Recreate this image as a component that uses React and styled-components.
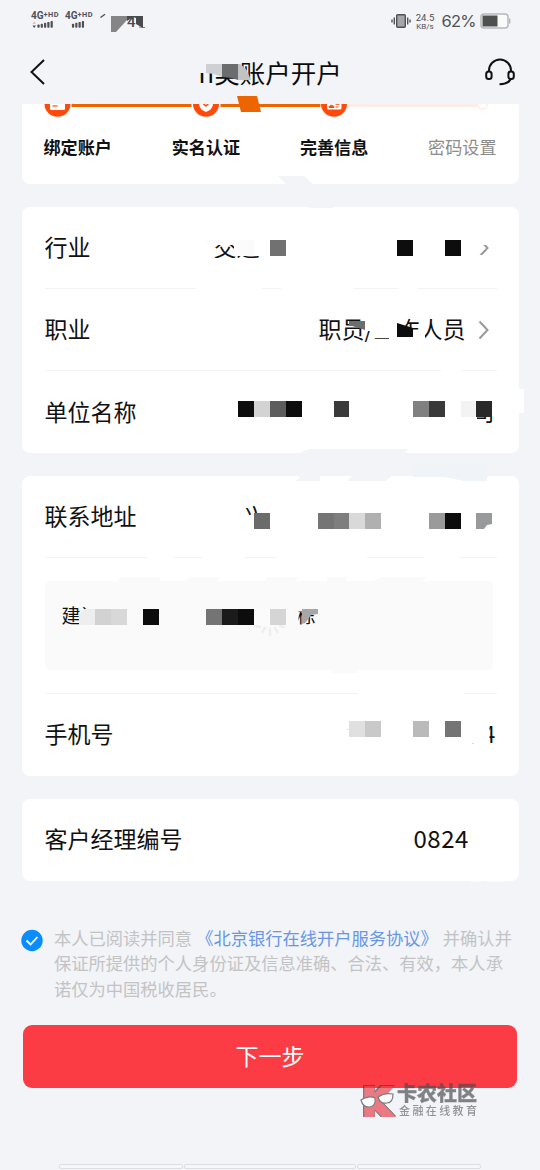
import React from "react";
import styled, { createGlobalStyle } from "styled-components";

const Global = createGlobalStyle`
  * { box-sizing: border-box; }
  html, body { margin: 0; padding: 0; background: #f2f4f8; }
  body { font-family: "Noto Sans CJK SC", "Noto Sans", sans-serif; color: #111; }
`;

const Page = styled.div`
  position: relative;
  display: flex;
  flex-direction: column;
  width: 540px;
  height: 1170px;
  overflow: hidden;
  background: #f2f4f8;
`;

const StatusBar = styled.header`
  display: flex;
  align-items: flex-start;
  justify-content: space-between;
  height: 42px;
  padding: 11px 29px 0 31px;
  color: #505154;
`;
const StatusGroup = styled.div`
  display: flex;
  align-items: ${(p) => p.$align || "flex-start"};
  gap: ${(p) => p.$gap}px;
`;
const Carrier = styled.div`
  display: flex;
  flex-direction: column;
  width: 30px;
  height: 18px;
`;
const Network = styled.div`
  display: flex;
  font: 700 10px/10px Roboto, sans-serif;
  white-space: nowrap;
  span { font-size: 7.4px; line-height: 8px; letter-spacing: 0.5px; }
`;
const Speed = styled.div`
  width: 20px;
  margin-right: 2px;
  font: 400 9.5px/10px Roboto, sans-serif;
  text-align: center;
  white-space: nowrap;
  small { display: block; font-size: 8px; line-height: 7px; }
`;
const Percent = styled.div`
  width: 34px;
  font: 400 16.5px/20px Inter, sans-serif;
  letter-spacing: -0.8px;
`;

const NavBar = styled.nav`
  display: flex;
  align-items: center;
  justify-content: space-between;
  height: 62px;
  padding: 0 25px 2px 29px;
`;
const Title = styled.h1`
  display: flex;
  margin: 0 0 0 9px;
  font-size: 25.5px;
  line-height: 36px;
  font-weight: 400;
  color: #0c0c0c;
`;
const Roman = styled.span`
  width: 16px;
  letter-spacing: 1.3px;
`;

const Card = styled.section`
  width: 497px;
  height: ${(p) => p.$h}px;
  flex: none;
  margin: 0 auto 23px 21.5px;
  padding: 0 23px;
  border-radius: 8px;
  background: #fff;
`;
const StepsCard = styled(Card)`
  padding: 0 22px;
  border-radius: 0 0 8px 8px;
`;
const StepTrack = styled.div`
  height: 30px;
  overflow: hidden;
  svg { display: block; }
`;
const StepLabels = styled.div`
  display: flex;
  justify-content: space-between;
`;
const StepLabel = styled.span`
  font-size: 17.1px;
  line-height: 26px;
  font-weight: ${(p) => (p.$pending ? 400 : 700)};
  color: ${(p) => (p.$pending ? "#8c8c8c" : "#111")};
`;

const Row = styled.div`
  display: flex;
  align-items: center;
  justify-content: space-between;
  height: ${(p) => p.$h || 82}px;
  margin-right: -1px;
  padding-bottom: 3px;
  border-bottom: ${(p) => (p.$last ? 0 : 1)}px solid #f3f3f4;
`;
const Label = styled.span`
  font-size: 23px;
  line-height: 32px;
  color: #111;
`;
const Value = styled.div`
  display: flex;
  align-items: center;
  gap: 12px;
  font-size: 23px;
  line-height: 32px;
  padding-right: ${(p) => p.$end ?? 8}px;
  svg { margin-top: 3px; }
`;
const Fragment = styled.span`
  width: ${(p) => p.$w}px;
  margin-right: ${(p) => p.$gap || 0}px;
  clip-path: ${(p) => p.$clip || "none"};
  white-space: nowrap;
`;
const AddressWrap = styled.div`
  height: 136px;
  padding-top: 23.4px;
  margin-right: -1px;
  border-bottom: 1px solid #f3f3f4;
`;
const AddressBox = styled.div`
  display: flex;
  width: 448.5px;
  height: 89px;
  padding: 21px 17px;
  border-radius: 5px;
  background: #fafafa;
  font-size: 19px;
  line-height: 26px;
`;
const ManagerCode = styled.span`
  width: 82px;
  font-family: "Noto Sans CJK SC", sans-serif;
  font-size: 24px;
  letter-spacing: 0.55px;
`;

const Agreement = styled.div`
  display: flex;
  gap: 11px;
  height: 76px;
  margin: 21px 0 0 21px;
`;
const AgreementText = styled.p`
  margin: 0;
  color: #c3c3c4;
  font-size: 17.28px;
  line-height: 25.5px;
  white-space: nowrap;
  a { color: #6796e8; margin: 0 5px 0 4px; }
`;
const NextButton = styled.button`
  width: 494px;
  height: 63px;
  flex: none;
  margin: 24.5px 0 0 23px;
  padding: 0 0 4px;
  border: 0;
  border-radius: 9px;
  background: #fc3c44;
  color: #fff;
  font: 400 23px/32px "Noto Sans CJK SC", sans-serif;
`;
const BottomTabs = styled.div`
  display: flex;
  gap: 1px;
  margin: 75.5px 0 0 59px;
`;
const BottomTab = styled.div`
  width: ${(p) => p.$w}px;
  height: 5px;
  border: 1px solid #dddee2;
  border-radius: 2px;
  background: #f6f7f9;
`;

const Overlay = styled.div`
  position: absolute;
  inset: 0;
  pointer-events: none;
`;
const Scrap = styled.i`
  position: absolute;
  left: ${(p) => p.$x}px;
  top: ${(p) => p.$y}px;
  width: ${(p) => p.$w}px;
  height: ${(p) => p.$h}px;
  background: ${(p) => p.$c};
  clip-path: ${(p) => p.$clip || "none"};
`;
const Watermark = styled.div`
  position: absolute;
  left: 359px;
  top: 1081px;
  display: flex;
  opacity: 0.68;
`;
const WatermarkLogo = styled.svg`
  overflow: visible;
  text {
    font: 700 37px "DejaVu Sans", sans-serif;
    fill: #e8404c;
    stroke: #e8404c;
    stroke-width: 4px;
    filter: drop-shadow(0.8px 0 0 #444) drop-shadow(-0.8px 0 0 #444) drop-shadow(0 0.8px 0 #444) drop-shadow(0 -0.8px 0 #444);
  }
`;
const WatermarkText = styled.div`
  margin: 1px 0 0 2px;
  color: #4a4c50;
  white-space: nowrap;
  b { display: block; font-size: 20px; line-height: 22px; font-weight: 900; -webkit-text-stroke: 0.3px #4a4c50; }
  span { display: block; margin: 0 0 0 2px; font-size: 11px; line-height: 12px; letter-spacing: 2.4px; color: #666; font-weight: 500; }
`;

const BG = "#f2f4f8";
const poly = (...pts) => `polygon(${pts.map(([x, y]) => `${x}px ${y}px`).join(",")})`;

// Each entry: x, y, width, height, colour, optional clip shape
const scraps = [
  // status bar and title
  [111, 16, 16, 16, "#858587", poly([0, 0], [16, 0], [16, 4], [5, 16], [0, 16])],
  [127, 16, 16, 12, "#4a4a4c", poly([0, 0], [16, 0], [16, 12], [9, 8], [9, 2], [6, 1], [0, 5])],
  [197, 58, 56, 15, BG, poly([0, 0], [42, 0], [42, 22], [0, 15])],
  [213, 72, 26, 6, BG, poly([0, 0], [26, 0], [26, 6], [9, 4], [0, 2])],
  [206, 64, 16, 16, "#cfd0d2", poly([0, 0], [16, 0], [16, 13], [8, 10], [0, 9])],
  [222, 64, 16, 16, "#6b6c6e", poly([0, 0], [16, 0], [16, 16], [10, 14], [0, 13])],
  [238, 64, 13, 16, "#c1c2c3", poly([0, 0], [2, 0], [8, 5], [13, 16], [0, 16])],
  [237, 96, 24, 16, "#ec6500", poly([0, 0], [20, 0], [24, 16], [4, 16])],
  [278, 176, 35, 8, BG, poly([0, 0], [26, 0], [35, 8], [8, 8])],
  [308, 207, 25, 1, BG],
  // industry
  [205, 236, 60, 9, "#fff"],
  [206, 240, 16, 4, "#fcfcfc"],
  [234, 240, 31, 15.5, "#fff"],
  [238, 240, 16, 16, "#fbfbfb"],
  [212, 258, 50, 6, "#fff"],
  [270, 240, 16, 16, "#717171"],
  [397, 240, 16, 16, "#0d0d0d"],
  [445, 240, 16, 16, "#0d0d0d"],
  [475, 236, 16, 9, "#fff"],
  [475, 255, 16, 7, "#fff"],
  [196, 287, 66, 4, "#fff"],
  [281, 287, 72, 4, "#fff"],
  [398, 287, 19, 4, "#fff"],
  // occupation
  [365, 316, 32, 15, "#fff"],
  [371, 330, 26, 7.5, "#fff"],
  [389, 330, 36, 15, "#fff"],
  [397, 316, 8, 9, "#fff"],
  [349, 321, 16, 10, "#6d6d6d", poly([0, 0], [16, 0], [16, 9], [0, 4])],
  [397, 321, 16, 16, "#0d0d0d", poly([0, 2], [16, 7], [16, 16], [0, 16])],
  [441, 369, 20, 4, "#fff"],
  // employer
  [470, 398, 26, 18, "#fff"],
  [470, 416, 7, 10, "#fff"],
  [477, 419, 9, 5, "#fff"],
  [238, 401, 16, 16, "#0d0d0d"],
  [254, 401, 16, 16, "#d3d3d3"],
  [270, 401, 16, 16, "#5d5d5d"],
  [286, 401, 16, 16, "#0d0d0d"],
  [334, 401, 15, 16, "#3a3a3a"],
  [413, 401, 16, 16, "#808080"],
  [429, 401, 16, 16, "#393939"],
  [461, 401, 15, 16, "#f3f3f3"],
  [476, 401, 16, 16, "#282828"],
  [518, 389, 6, 24, "#fff"],
  [297, 449, 111, 5, BG, poly([0, 5], [12, 0], [111, 0], [107, 5])],
  // contact address
  [413, 465, 75, 12, "#eef4f8"],
  [295, 476, 25, 5, BG, poly([4, 0], [25, 0], [25, 5], [0, 5], [5, 2])],
  [347, 476, 44, 5, BG, poly([5, 0], [44, 0], [39, 5], [0, 5])],
  [440, 476, 47, 5, "#eef4f8", poly([0, 0], [47, 0], [47, 5], [24, 5])],
  [254, 513, 16, 16, "#6b6b6b"],
  [318, 513, 16, 16, "#757575"],
  [334, 513, 15, 16, "#7e7e7e"],
  [349, 513, 16, 16, "#d9d9d9"],
  [365, 513, 16, 16, "#b0b0b0"],
  [429, 513, 16, 16, "#9a9a9a"],
  [445, 513, 16, 16, "#0d0d0d"],
  [476, 513, 16, 16, "#98999b", poly([0, 0], [16, 0], [16, 11], [11, 12], [8, 16], [0, 16])],
  [148, 556, 25, 3, "#fff"],
  [202, 556, 42, 3, "#fff"],
  [277, 556, 90, 3, "#fff"],
  [424, 556, 35, 3, "#fff"],
  // address details
  [116, 577, 44, 5, "#fafafa", poly([5, 0], [44, 0], [44, 5], [0, 5])],
  [185, 577, 36, 5, "#fafafa", poly([5, 0], [36, 0], [31, 5], [0, 5])],
  [264, 577, 36, 5, "#fafafa", poly([3, 0], [36, 0], [30, 5], [0, 5])],
  [327, 577, 19, 5, "#fafafa"],
  [370, 577, 58, 5, "#fafafa", poly([12, 0], [58, 0], [50, 5], [0, 5])],
  [332, 670, 26, 3, "#fafafa"],
  [79, 613, 16, 16, "#fafafa"],
  [79, 609, 16, 16, "#eeeeee", poly([5, 0], [16, 0], [16, 16], [0, 16], [0, 6])],
  [95, 609, 16, 16, "#d2d2d2"],
  [111, 609, 16, 16, "#d8d8d8"],
  [143, 609, 16, 16, "#0d0d0d"],
  [206, 609, 16, 16, "#747474"],
  [222, 609, 16, 16, "#1b1b1b"],
  [238, 609, 16, 16, "#0d0d0d"],
  [254, 609, 16, 16, "#fbfbfb"],
  [270, 609, 16, 16, "#d5d5d5"],
  [302, 609, 16, 16, "#a7a7a7", poly([0, 0], [16, 0], [16, 5], [9, 6], [4, 13], [0, 15])],
  // phone
  [358, 692, 106, 4, "#fff"],
  [349, 721, 16, 16, "#e0e0e0"],
  [365, 721, 16, 16, "#c9c9c9"],
  [413, 721, 16, 16, "#bababa"],
  [445, 721, 16, 16, "#747474"],
  [347, 729, 1, 1, "#ccc"],
  [472, 743, 2, 1, "#ddd"],
  // manager code
  [471, 828, 18, 26, "#fff"],
  [469, 840, 2, 14, "#fff"],
  [470, 881, 11, 1.3, "#fafbfc"],
  [486, 881, 19, 1.3, "#fafbfc"],
];

const Signal = ({ arrows }) => (
  <svg width="26" height="9" viewBox="0 0 26 9">
    {arrows && <path d="M0 3.200 2 .6l2 2.600z" fill="#bfc1c5" />}
    {arrows && <path d="M0 5 2 8l2-3z" fill="#505154" />}
    {[0, 1, 2, 3, 4].map((i) =>
      !arrows && i === 0 ? null : (
        <rect key={i} x={(arrows ? 5.6 : 2.5) + i * 3.7} y={4 - i} width="2.500" height={3.5 + i} rx=".8" fill="#505154" />
      )
    )}
  </svg>
);

const Chevron = () => (
  <svg width="11" height="20" viewBox="0 0 11 20" fill="none" stroke="#999" strokeWidth="2">
    <path d="M1.500 1.500 9.500 10l-8 8.500" />
  </svg>
);

export default function App() {
  return (
    <Page>
      <Global />
      <StatusBar>
        <StatusGroup $gap={4}>
          <Carrier><Network>4G<span>+HD</span></Network><Signal arrows /></Carrier>
          <Carrier><Network>4G<span>+HD</span></Network><Signal /></Carrier>
          <svg width="50" height="22" viewBox="0 0 50 22">
            <path d="M1.500 6.500 6 3.200" stroke="#505154" strokeWidth="1.400" />
            <text x="28" y="16" fontFamily="Roboto" fontWeight="500" fontSize="15" fill="#4a4a4c">4</text>
            <path d="M40 16l6 .5" stroke="#77787b" />
          </svg>
        </StatusGroup>
        <StatusGroup $gap={4.5} $align="center">
          <svg width="20" height="16" viewBox="0 0 20 16" fill="none" stroke="#505154">
            <rect x="5.700" y="1.700" width="8.600" height="12.600" rx="1" strokeWidth="1.400" fill="#a5a6a8" />
            <path d="M1 6.500v3M3.300 4.500v7M16.700 4.500v7M19 6.500v3" strokeWidth="1.400" />
          </svg>
          <Speed>24.5<small>KB/s</small></Speed>
          <Percent>62%</Percent>
          <svg width="31" height="16" viewBox="0 0 31 16">
            <rect x="1" y="1" width="27" height="14" rx="3" fill="#fafafa" stroke="#b7b8ba" strokeWidth="1.500" />
            <rect x="2.500" y="2.500" width="15" height="11" fill="#505050" />
            <path d="M29.700 5.500v5" stroke="#b7b8ba" strokeWidth="1.400" />
          </svg>
        </StatusGroup>
      </StatusBar>

      <NavBar>
        <svg width="17" height="28" viewBox="0 0 17 28" fill="none" stroke="#111" strokeWidth="2">
          <path d="M15 2 2.500 14 15 26" />
        </svg>
        <Title><Roman>II</Roman>类账户开户</Title>
        <svg width="30" height="28" viewBox="0 0 30 28" fill="none" stroke="#111" strokeWidth="2">
          <path d="M4 13.500V12.500a11 11 0 0 1 22 0v6c0 5-4 7.500-11.500 7.700" />
          <rect x="1.200" y="13.500" width="5.400" height="7.500" rx="2.500" fill={BG} />
          <rect x="23.400" y="13.500" width="5.400" height="7.500" rx="2.500" fill={BG} />
        </svg>
      </NavBar>

      <StepsCard $h={80}>
        <StepTrack>
          <svg width="453" height="14" viewBox="0.5 0 453 14">
            <path d="M28 1.300h120M177 1.300h100" stroke="#ee6500" strokeWidth="3.200" />
            <path d="M304 1.300h130" stroke="#ffece6" strokeWidth="3.200" />
            {[14, 162.5, 290.5].map((x) => <circle key={x} cx={x} cy="-.2" r="13" fill="#ff4a0a" />)}
            <rect x="6.500" y="-7" width="15" height="13" rx="1.500" fill="#fff" />
            <path d="M9 2h5" stroke="#ff4a0a" strokeWidth="1.200" />
            <path d="M155.500-6h14v6q0 5-7 8-7-3-7-8z" fill="#fff" />
            <path d="M159-1l3.500 3 4-4" fill="none" stroke="#ff4a0a" strokeWidth="1.500" />
            <rect x="283.500" y="-7" width="14.500" height="12.500" rx="1.500" fill="#fff" />
            <path d="M285.500 3.500c0-3 5-3 5 0zM292 .3h4M292 3h3" fill="#ff4a0a" stroke="#ff4a0a" />
            <circle cx="439" cy="0" r="5" fill="#fff" stroke="#ffece6" strokeWidth="1.500" />
          </svg>
        </StepTrack>
        <StepLabels>
          <StepLabel>绑定账户</StepLabel>
          <StepLabel>实名认证</StepLabel>
          <StepLabel>完善信息</StepLabel>
          <StepLabel $pending>密码设置</StepLabel>
        </StepLabels>
      </StepsCard>

      <Card $h={246.4}>
        <Row>
          <Label>行业</Label>
          <Value><Fragment $w={46} $gap={206}>交通</Fragment><Chevron /></Value>
        </Row>
        <Row>
          <Label>职业</Label>
          <Value><span>职员/工作人员</span><Chevron /></Value>
        </Row>
        <Row $last>
          <Label>单位名称</Label>
          <Value $end={2}><span>司</span></Value>
        </Row>
      </Card>

      <Card $h={299.6}>
        <Row $h={81.6}>
          <Label>联系地址</Label>
          <Value $end={7}><Fragment $w={23} $gap={222} $clip="inset(0 10px 15px 0)">兴</Fragment></Value>
        </Row>
        <AddressWrap>
          <AddressBox>
            <Fragment $w={38} $gap={197} $clip="inset(0 12px 0 0)">建设</Fragment>
            <Fragment $w={19} $clip="inset(9px 0 0 2px)">栋</Fragment>
          </AddressBox>
        </AddressWrap>
        <Row $h={82} $last>
          <Label>手机号</Label>
          <Value $end={1}><Fragment $w={13} $clip="inset(8px 0 0 7px)">4</Fragment></Value>
        </Row>
      </Card>

      <Card $h={82}>
        <Row $last>
          <Label>客户经理编号</Label>
          <Value $end={1}><ManagerCode>08245</ManagerCode></Value>
        </Row>
      </Card>

      <Agreement>
        <svg width="22" height="30" viewBox="0 0 22 30">
          <circle cx="11" cy="15.500" r="10.700" fill="#0a8cff" />
          <path d="M5.500 15.500l4 4 7-7.500" fill="none" stroke="#fff" strokeWidth="1.800" />
        </svg>
        <AgreementText>
          本人已阅读并同意<a>《北京银行在线开户服务协议》</a>并确认并<br />
          保证所提供的个人身份证及信息准确、合法、有效，本人承<br />
          诺仅为中国税收居民。
        </AgreementText>
      </Agreement>
      <NextButton>下一步</NextButton>
      <BottomTabs>
        <BottomTab $w={124} />
        <BottomTab $w={172} />
        <BottomTab $w={124} />
      </BottomTabs>

      <Overlay>
        {scraps.map(([x, y, w, h, c, clip], i) => (
          <Scrap key={i} $x={x} $y={y} $w={w} $h={h} $c={c} $clip={clip} />
        ))}
        <Scrap as="svg" $x={254} $y={625} $w={32} $h={12} $c="transparent" viewBox="0 0 32 12" fill="none" stroke="#eeeeee" strokeWidth="2.500" strokeLinecap="round">
          <path d="M1 1l5 1M11 3L8.500 7M16 4v6M21 3l2.500 4M26 1l4 1" />
        </Scrap>
      </Overlay>

      <Watermark>
        <WatermarkLogo width="36" height="36" viewBox="0 0 36 36">
          <text x="4" y="33.500" textLength="27" lengthAdjust="spacingAndGlyphs">K</text>
          <path d="M2 19c4-3 10-4 14-2 1 6-2 9-6 9-5 0-7-3-8-7zM19 16c4-3 10-4 15-3 0 6-2 9-6 9-5 1-8-2-9-6z" fill="#fff" stroke="#444" strokeWidth="1.200" />
        </WatermarkLogo>
        <WatermarkText>
          <b>卡农社区</b>
          <span>金融在线教育</span>
        </WatermarkText>
      </Watermark>
    </Page>
  );
}
